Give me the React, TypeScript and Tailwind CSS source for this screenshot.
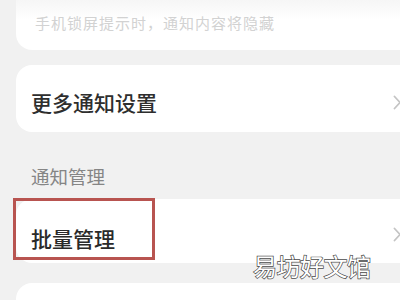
import { ReactNode } from "react";

const font = "font-['Noto_Sans_CJK_SC','Noto_Sans',sans-serif]";

function Chevron() {
  return (
    <svg width="9" height="15" viewBox="0 0 9 15" fill="none" className="shrink-0">
      <path d="M1.5 1.5 L7 7.5 L1.5 13.5" stroke="#c4c4c4" strokeWidth="1.8" strokeLinecap="round" strokeLinejoin="round" />
    </svg>
  );
}

function Row({ children, className = "" }: { children: ReactNode; className?: string }) {
  return (
    <div className={`relative flex w-[400px] items-start justify-between rounded-2xl bg-white pl-[15px] pr-[14px] ${className}`}>
      {children}
    </div>
  );
}

export default function App() {
  return (
    <div className={`relative h-[300px] w-[400px] overflow-hidden bg-[#f1f1f1] pl-4 ${font}`}>
      {/* tail of the previous card */}
      <div className="h-[50px] w-[400px] rounded-b-2xl bg-gradient-to-b from-[#f6f6f6] to-white to-40% pl-[19px] pt-[15px]">
        <p className="text-[15px] leading-none tracking-[1px] text-[#d2d2d2]">手机锁屏提示时，通知内容将隐藏</p>
      </div>

      <Row className="mt-[15px] h-[67px] pt-[27px]">
        <span className="text-[21px] font-medium leading-none text-[#2e2e2e]">更多通知设置</span>
        <span className="mt-[3px]"><Chevron /></span>
      </Row>

      <p className="mt-[35px] mb-[13px] pl-[15px] text-[18.5px] leading-none text-[#858585]">通知管理</p>

      <Row className="h-[64px] pt-[29px]">
        <span className="text-[21px] font-medium leading-none text-[#2a2a2a]">批量管理</span>
        <span className="-mt-[1px]"><Chevron /></span>
        {/* highlight box */}
        <div className="absolute -left-[3px] -top-[1px] h-[62px] w-[142px] border-[3px] border-[#b85450]" />
      </Row>

      <div className="mt-[20px] h-[60px] w-[400px] rounded-t-2xl bg-white" />

      {/* watermark */}
      <div className="absolute left-[253px] top-[254px] text-[24px] font-normal leading-none tracking-[-0.5px] text-white [-webkit-text-stroke:1.4px_#4a4a4a] [paint-order:stroke_fill]">
        易坊好文馆
      </div>
    </div>
  );
}
